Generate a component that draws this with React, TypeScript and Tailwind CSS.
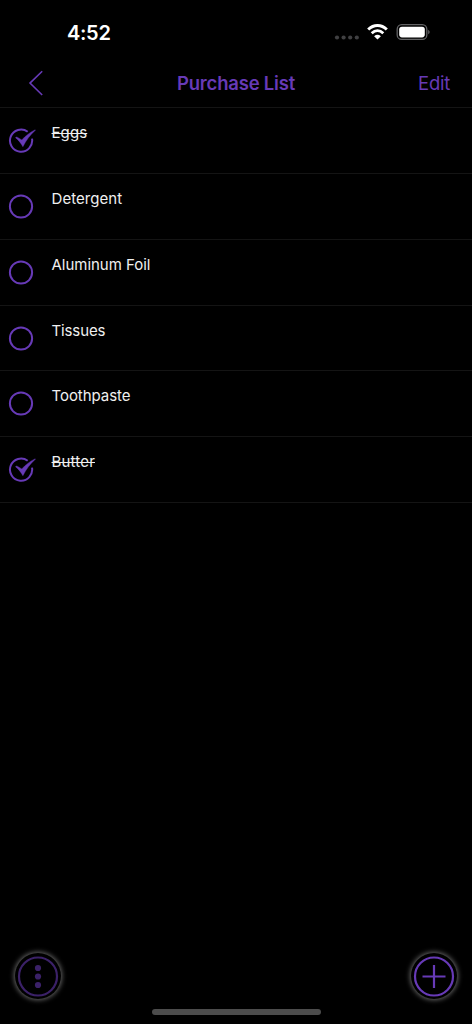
import React from "react";

type Item = { name: string; done: boolean; tracking: string };

const items: Item[] = [
  { name: "Eggs", done: true, tracking: "tracking-[0.1px]" },
  { name: "Detergent", done: false, tracking: "tracking-[0.05px]" },
  { name: "Aluminum Foil", done: false, tracking: "tracking-[-0.02px]" },
  { name: "Tissues", done: false, tracking: "tracking-[-0.12px]" },
  { name: "Toothpaste", done: false, tracking: "tracking-[-0.05px]" },
  { name: "Butter", done: true, tracking: "tracking-[0.18px]" },
];

function CheckCircle({ done }: { done: boolean }) {
  return (
    <svg width="30" height="28" viewBox="0 0 30 28" fill="none" className="shrink-0">
      {done ? (
        <>
          <path
            d="M19.7 4.7A11.1 11.1 0 1 0 24 11.6"
            stroke="#673ab7"
            strokeWidth="2"
          />
          <path
            d="M7.5 10.7Q8.4 9.6 9.6 10.4L13.8 12.9C17.6 8.8 21.8 5.4 26.9 2.9C27.4 2.7 27.5 3.1 27.1 3.5C22.2 8 18.2 13.2 14.9 19.7C13 16.3 10.7 13.2 7.5 10.7Z"
            fill="#673ab7"
            stroke="#673ab7"
            strokeWidth=".4"
            strokeLinejoin="round"
          />
        </>
      ) : (
        <circle cx="13" cy="13.5" r="11.1" stroke="#673ab7" strokeWidth="2" />
      )}
    </svg>
  );
}

function StatusBar() {
  return (
    <div className="flex h-[60px] items-start justify-between pl-[67px] pr-10 text-white">
      <span className="mt-[21px] text-[20px] font-semibold leading-6 tracking-[-0.3px]">4:52</span>
      <div className="mt-5 flex">
        <svg width="30" height="24" viewBox="0 0 30 24" fill="#404042">
          <circle cx="7" cy="17.5" r="2.1" />
          <circle cx="13.6" cy="17.5" r="2.1" />
          <circle cx="20.2" cy="17.5" r="2.1" />
          <circle cx="26.8" cy="17.5" r="2.1" />
        </svg>
        <svg width="36" height="24" viewBox="0 0 36 24" fill="none" stroke="#fff">
          <path d="M8.2 9.5C13.7 4.2 21.3 4.2 26.8 9.5" strokeWidth="3" />
          <path d="M11.7 13.2C15.2 9.9 19.8 9.9 23.3 13.2" strokeWidth="2.8" />
          <path d="M14.1 16.2Q17.5 13.3 20.9 16.2L17.5 19.6Z" fill="#fff" stroke="none" />
        </svg>
        <svg width="36" height="24" viewBox="0 0 36 24" fill="none">
          <rect x="1.2" y="4.7" width="29.6" height="14.7" rx="4.5" stroke="#636365" strokeWidth="1.3" />
          <rect x="3.2" y="6.7" width="25.6" height="10.7" rx="2.8" fill="#fff" />
          <path d="M32.2 9.7Q35.2 12 32.2 14.3Z" fill="#636365" />
        </svg>
      </div>
    </div>
  );
}

export default function App() {
  return (
    <main className="flex h-[1024px] w-[472px] flex-col overflow-hidden bg-black font-['Inter',sans-serif]">
      <StatusBar />
      <header className="grid h-[48px] grid-cols-[120px_1fr_120px] items-start border-b border-[#141414] text-[#673ab7]">
        <button aria-label="Back" className="pl-[26px] pt-2">
          <svg width="20" height="30" viewBox="0 0 20 30" fill="none" stroke="currentColor" strokeWidth="1.6">
            <path d="M16.2 3.2L4 15.1L16.2 27" />
          </svg>
        </button>
        <h1 className="pt-[11px] text-center text-[18.5px] font-semibold leading-6 tracking-[-0.2px]">Purchase List</h1>
        <button className="pr-[22px] pt-[11px] text-right text-[18.5px] leading-6 tracking-[-0.25px]">Edit</button>
      </header>
      <ul>
        {items.map((item) => (
          <li key={item.name} className="flex h-[65.86px] items-start border-b border-[#141414] pl-2">
            <span className="mt-[19px]">
              <CheckCircle done={item.done} />
            </span>
            <span
              className={`ml-[13.5px] mt-[15px] text-[15px] leading-5 text-[#f0f0f0] ${item.tracking} ${
                item.done ? "line-through decoration-[1.4px]" : ""
              }`}
            >
              {item.name}
            </span>
          </li>
        ))}
      </ul>
      <footer className="mt-auto flex h-[71px] flex-col">
        <div className="flex justify-between px-[15px]">
          <button
            aria-label="More options"
            className="flex size-[46px] items-center justify-center rounded-full bg-black shadow-[0_0_5px_1px_#686868]"
          >
            <svg width="42" height="42" viewBox="0 0 42 42" fill="none">
              <circle cx="21" cy="21.5" r="19" stroke="#3b2168" strokeWidth="2.2" />
              <g fill="#3b2168">
                <circle cx="21" cy="13" r="3.1" />
                <circle cx="21" cy="21.5" r="3.1" />
                <circle cx="21" cy="30" r="3.1" />
              </g>
            </svg>
          </button>
          <button
            aria-label="Add item"
            className="flex size-[46px] items-center justify-center rounded-full bg-black shadow-[0_0_5px_1px_#686868]"
          >
            <svg width="42" height="42" viewBox="0 0 42 42" fill="none" stroke="#673ab7" strokeWidth="2.2">
              <circle cx="21" cy="21.5" r="19" />
              <path d="M21 10V33M9.5 21.5H32.5" />
            </svg>
          </button>
        </div>
        <div className="mx-auto mt-[10px] h-[6px] w-[169px] rounded-full bg-[#4c4c4c]" />
      </footer>
    </main>
  );
}
